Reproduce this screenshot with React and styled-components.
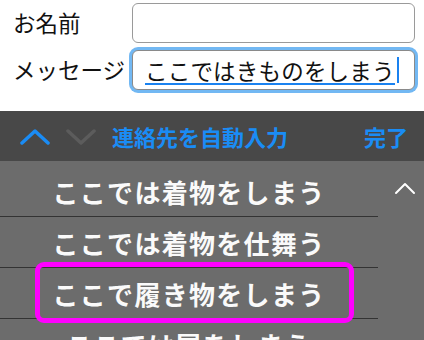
import React from "react";
import styled, { createGlobalStyle } from "styled-components";

const GlobalStyle = createGlobalStyle`
  html, body {
    margin: 0;
    padding: 0;
    background: #ffffff;
    font-family: "Noto Sans CJK JP", "Noto Sans", sans-serif;
  }
`;

const suggestions = [
  "ここでは着物をしまう",
  "ここでは着物を仕舞う",
  "ここで履き物をしまう",
  "ここでは履をしまう",
];

function Chevron({ up, color, width, height, stroke }) {
  const pts = up
    ? `2,${height - 2} ${width / 2},2 ${width - 2},${height - 2}`
    : `2,2 ${width / 2},${height - 2} ${width - 2},2`;
  return (
    <svg width={width} height={height} viewBox={`0 0 ${width} ${height}`}>
      <polyline
        points={pts}
        fill="none"
        stroke={color}
        strokeWidth={stroke}
        strokeLinecap="round"
        strokeLinejoin="round"
      />
    </svg>
  );
}

function App() {
  return (
    <Page>
      <GlobalStyle />
      <Form>
        <Label>お名前</Label>
        <Field />
        <Label>メッセージ</Label>
        <Field focused>
          <Composing>ここではきものをしまう</Composing>
          <Caret />
        </Field>
      </Form>

      <Toolbar>
        <Arrows>
          <Chevron up color="#1a8cf5" width={30} height={16} stroke={3.5} />
          <Chevron color="#5c5c5c" width={30} height={16} stroke={3.5} />
        </Arrows>
        <AutoFill>連絡先を自動入力</AutoFill>
        <Done>完了</Done>
      </Toolbar>

      <Candidates>
        <List>
          {suggestions.map((s, i) => (
            <Row key={s} last={i === suggestions.length - 1}>
              {s}
              {i === 2 && <Highlight />}
            </Row>
          ))}
        </List>
        <Expand>
          <Chevron up color="#ffffff" width={22} height={13} stroke={2} />
        </Expand>
      </Candidates>
    </Page>
  );
}

export default App;

const Page = styled.div`
  width: 424px;
  height: 340px;
  overflow: hidden;
  display: flex;
  flex-direction: column;
`;

const Form = styled.div`
  flex: none;
  display: grid;
  grid-template-columns: 119px 283px;
  grid-template-rows: 40px 40px;
  row-gap: 7px;
  align-content: start;
  align-items: center;
  padding: 3px 0 0 13px;
  height: 108px;
  box-sizing: border-box;
`;

const Label = styled.div`
  font-size: 22.5px;
  color: #111;
  line-height: 1;
  margin-top: -2px;
  white-space: nowrap;
`;

const Field = styled.div`
  height: 40px;
  box-sizing: border-box;
  border: 1px solid ${(p) => (p.focused ? "#8a8a8a" : "#9a9a9a")};
  border-radius: 6px;
  background: #fff;
  display: flex;
  align-items: center;
  padding-left: 12px;
  box-shadow: ${(p) => (p.focused ? "0 0 0 3px #72b8f3" : "none")};
`;

const Composing = styled.span`
  font-size: 22.5px;
  letter-spacing: 0.2px;
  line-height: 26px;
  color: #111;
  border-bottom: 2px solid #1a82f0;
  margin-top: 2px;
  white-space: nowrap;
`;

const Caret = styled.span`
  width: 2px;
  height: 26px;
  background: #1a82f0;
  margin-left: 2px;
`;

const Toolbar = styled.div`
  flex: none;
  height: 50px;
  margin-top: 3px;
  background: #484848;
  display: flex;
  align-items: center;
  padding: 0 16px 0 20px;
`;

const Arrows = styled.div`
  display: flex;
  gap: 16px;
  align-items: center;
  margin-top: 2px;
`;

const AutoFill = styled.div`
  margin-left: 16px;
  font-size: 22px;
  font-weight: 700;
  color: #1a8cf5;
  flex: 1;
  white-space: nowrap;
`;

const Done = styled.div`
  font-size: 22px;
  font-weight: 700;
  color: #1a8cf5;
  white-space: nowrap;
`;

const Candidates = styled.div`
  flex: 1;
  background: #6c6c6c;
  display: flex;
  padding-top: 5px;
`;

const List = styled.div`
  width: 378px;
  display: flex;
  flex-direction: column;
`;

const Row = styled.div`
  position: relative;
  height: 50px;
  flex: none;
  display: flex;
  align-items: center;
  justify-content: center;
  font-size: 26px;
  font-weight: 700;
  letter-spacing: 1.3px;
  color: #fafafa;
  white-space: nowrap;
  border-bottom: ${(p) => (p.last ? "none" : "1px solid #333")};
`;

const Highlight = styled.div`
  position: absolute;
  left: 35px;
  width: 319px;
  top: -6px;
  bottom: -5px;
  border: 5px solid #ff00ff;
  border-radius: 9px;
  box-sizing: border-box;
`;

const Expand = styled.div`
  flex: 1;
  display: flex;
  justify-content: center;
  padding-top: 16px;
  padding-left: 8px;
`;
